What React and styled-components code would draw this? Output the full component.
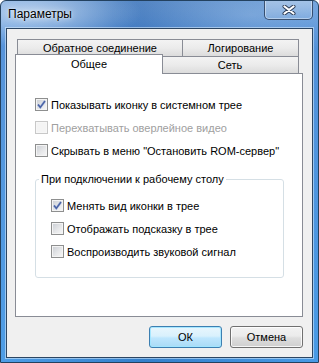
import React from 'react';
import styled, { createGlobalStyle } from 'styled-components';

const GlobalStyle = createGlobalStyle`
  html, body {
    margin: 0;
    padding: 0;
    background: #ffffff;
  }
  body {
    font-family: "Liberation Sans", Arial, sans-serif;
    font-size: 11px;
    color: #000;
  }
  * {
    box-sizing: border-box;
  }
`;

const Window = styled.div`
  width: 319px;
  height: 363px;
  display: flex;
  flex-direction: column;
  border: 1px solid #23415f;
  border-radius: 6px 6px 0 0;
  overflow: hidden;
  background:
    radial-gradient(ellipse 110px 34px at 30px 12px, rgba(255, 255, 255, 0.55), rgba(255, 255, 255, 0) 100%),
    radial-gradient(ellipse 140px 40px at 250px 14px, rgba(255, 255, 255, 0.22), rgba(255, 255, 255, 0) 100%),
    linear-gradient(to right, rgba(255, 255, 255, 0.08) 0%, rgba(0, 30, 90, 0.18) 45%, rgba(255, 255, 255, 0.05) 100%),
    linear-gradient(to bottom, #5f97d8 0%, #4a8bd6 30px, #3f95e4 100%);
`;

const TitleBar = styled.div`
  height: 27px;
  flex: 0 0 27px;
  display: flex;
  align-items: flex-start;
`;

const Title = styled.div`
  margin: 6px 0 0 7px;
  font-size: 12px;
  line-height: 15px;
  color: #000;
  text-shadow: 0 0 6px rgba(255, 255, 255, 0.9), 0 0 2px rgba(255, 255, 255, 0.7);
`;

const CloseButton = styled.div`
  margin: -1px 5px 0 auto;
  width: 49px;
  height: 20px;
  display: flex;
  align-items: center;
  justify-content: center;
  border: 1px solid rgba(25, 45, 75, 0.75);
  border-top: none;
  border-radius: 0 0 5px 5px;
  background: linear-gradient(rgba(255, 255, 255, 0.35), rgba(255, 255, 255, 0.1));
  box-shadow: inset 0 0 0 1px rgba(255, 255, 255, 0.4);
`;

const Client = styled.div`
  flex: 1;
  margin: 0 5px 4px 5px;
  border: 1px solid #2c4663;
  box-shadow: 0 0 0 1px rgba(220, 238, 255, 0.55);
  background: #f0f0f0;
  padding: 10px 9px 9px 8px;
  display: flex;
  flex-direction: column;
`;

const TabRow = styled.div`
  display: flex;
  align-items: flex-end;
  height: 17px;
  padding-left: 2px;
`;

const Tab = styled.div`
  flex: 0 0 ${p => p.$w}px;
  height: 17px;
  margin-left: ${p => p.$ml || 0}px;
  border: 1px solid #898c95;
  border-bottom: none;
  background: linear-gradient(#f3f3f3 0%, #ebebeb 50%, #dcdcdc 100%);
  display: flex;
  align-items: center;
  justify-content: center;
  line-height: 13px;
  white-space: nowrap;
`;

const ActiveTab = styled(Tab)`
  position: relative;
  z-index: 1;
  height: 20px;
  margin-bottom: -1px;
  background: #ffffff;
`;

const Panel = styled.div`
  height: 244px;
  border: 1px solid #898c95;
  background: #ffffff;
  padding: 19px 0 0 19px;
`;

const CheckRow = styled.label`
  display: flex;
  align-items: center;
  gap: 3px;
  height: 23px;
  white-space: nowrap;
  color: ${p => (p.$disabled ? '#a0a0a0' : '#000')};
`;

const Box = styled.span`
  flex: 0 0 13px;
  width: 13px;
  height: 13px;
  display: flex;
  align-items: center;
  justify-content: center;
  border: 1px solid ${p => (p.$disabled ? '#c8c8c8' : '#8e8f8f')};
  background: ${p =>
    p.$disabled ? '#f4f4f4' : 'linear-gradient(135deg, #c9cdd3 0%, #e6e7e9 55%, #f8f8f8 100%)'};
  box-shadow: inset 0 0 0 1px ${p => (p.$disabled ? '#f7f7f7' : '#f4f4f4')};
`;

const Group = styled.fieldset`
  width: 249px;
  margin: 11px 0 0 0;
  padding: 0;
  min-width: 0;
  border: 1px solid #d5dfe5;
  border-radius: 3px;
`;

const Legend = styled.legend`
  margin-left: 3px;
  padding: 0 2px;
  line-height: 13px;
  color: #000;
`;

const GroupBody = styled.div`
  padding: 8px 0 14px 15px;
`;

const ButtonRow = styled.div`
  display: flex;
  justify-content: flex-end;
  gap: 8px;
  margin-top: 9px;
`;

const Button = styled.div`
  width: 73px;
  height: 22px;
  display: flex;
  align-items: center;
  justify-content: center;
  border-radius: 3px;
  border: 1px solid ${p => (p.$primary ? '#3c7fb1' : '#707070')};
  background: ${p =>
    p.$primary
      ? 'linear-gradient(#e8f6fd 0%, #d9f1fc 45%, #bee6fd 55%, #a9dbf6 100%)'
      : 'linear-gradient(#f2f2f2 0%, #ebebeb 45%, #dddddd 55%, #cfcfcf 100%)'};
  box-shadow: inset 0 0 0 1px ${p => (p.$primary ? 'rgba(160, 230, 255, 0.9)' : 'rgba(255, 255, 255, 0.8)')};
`;

const Check = () => (
  <svg width="11" height="11" viewBox="0 0 11 11">
    <path d="M2 5.5 L4.3 8.3 L9 2" fill="none" stroke="#a9bbe0" strokeWidth="2.4" />
    <path d="M2 5.5 L4.3 8.3 L9 2" fill="none" stroke="#4a62a3" strokeWidth="1.4" />
  </svg>
);

const CloseGlyph = () => (
  <svg width="14" height="10" viewBox="0 0 14 10">
    <path d="M2.5 1.5 L11.5 8.5 M11.5 1.5 L2.5 8.5" stroke="#2b3b55" strokeWidth="4" strokeLinecap="round" />
    <path d="M2.5 1.5 L11.5 8.5 M11.5 1.5 L2.5 8.5" stroke="#ffffff" strokeWidth="2.2" strokeLinecap="round" />
  </svg>
);

const CheckItem = ({ checked, disabled, children }) => (
  <CheckRow $disabled={disabled}>
    <Box $disabled={disabled}>{checked && <Check />}</Box>
    {children}
  </CheckRow>
);

const App = () => (
  <>
    <GlobalStyle />
    <Window>
      <TitleBar>
        <Title>Параметры</Title>
        <CloseButton>
          <CloseGlyph />
        </CloseButton>
      </TitleBar>
      <Client>
        <TabRow>
          <Tab $w={166}>Обратное соединение</Tab>
          <Tab $w={117} $ml={-1}>Логирование</Tab>
        </TabRow>
        <TabRow>
          <ActiveTab $w={148} $ml={-2}>Общее</ActiveTab>
          <Tab $w={138} $ml={-2}>Сеть</Tab>
        </TabRow>
        <Panel>
          <CheckItem checked>Показывать иконку в системном трее</CheckItem>
          <CheckItem disabled>Перехватывать оверлейное видео</CheckItem>
          <CheckItem>Скрывать в меню "Остановить ROM-сервер"</CheckItem>
          <Group>
            <Legend>При подключении к рабочему столу</Legend>
            <GroupBody>
              <CheckItem checked>Менять вид иконки в трее</CheckItem>
              <CheckItem>Отображать подсказку в трее</CheckItem>
              <CheckItem>Воспроизводить звуковой сигнал</CheckItem>
            </GroupBody>
          </Group>
        </Panel>
        <ButtonRow>
          <Button $primary>ОК</Button>
          <Button>Отмена</Button>
        </ButtonRow>
      </Client>
    </Window>
  </>
);

export default App;
